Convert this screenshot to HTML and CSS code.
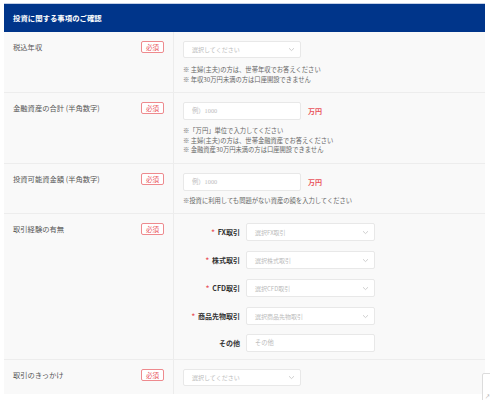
FILE: index.html
```html
<!DOCTYPE html>
<html lang="ja">
<head>
    <meta charset="UTF-8">
    <meta name="viewport" content="width=device-width, initial-scale=1.0">
    <title>投資に関する事項のご確認</title>
    <link rel="stylesheet" href="styles.css">
</head>
<body>
    <div class="form-box">
        <div class="form-head">投資に関する事項のご確認</div>

        <div class="row">
            <div class="row-label">
                <span>税込年収</span>
                <span class="badge">必須</span>
            </div>
            <div class="row-body">
                <div class="select">
                    <span>選択してください</span>
                    <svg class="chev" width="7" height="5" viewBox="0 0 7 5"><path d="M1 1.2 3.5 3.6 6 1.2" fill="none" stroke="#c4c4c4" stroke-width="0.8"/></svg>
                </div>
                <div class="notes">
                    <p>※ 主婦(主夫)の方は、世帯年収でお答えください</p>
                    <p>※ 年収30万円未満の方は口座開設できません</p>
                </div>
            </div>
        </div>

        <div class="row">
            <div class="row-label">
                <span>金融資産の合計 (半角数字)</span>
                <span class="badge">必須</span>
            </div>
            <div class="row-body">
                <div class="field-line">
                    <div class="input">例）1000</div>
                    <span class="unit">万円</span>
                </div>
                <div class="notes notes-tight">
                    <p>※「万円」単位で入力してください</p>
                    <p>※ 主婦(主夫)の方は、世帯金融資産でお答えください</p>
                    <p>※ 金融資産30万円未満の方は口座開設できません</p>
                </div>
            </div>
        </div>

        <div class="row">
            <div class="row-label">
                <span>投資可能資金額 (半角数字)</span>
                <span class="badge">必須</span>
            </div>
            <div class="row-body">
                <div class="field-line">
                    <div class="input">例）1000</div>
                    <span class="unit">万円</span>
                </div>
                <div class="notes notes-one">
                    <p>※投資に利用しても問題がない資産の額を入力してください</p>
                </div>
            </div>
        </div>

        <div class="row">
            <div class="row-label">
                <span>取引経験の有無</span>
                <span class="badge">必須</span>
            </div>
            <div class="row-body body-sub">
                <div class="sub-list">
                    <div class="sub-row">
                        <span class="sub-label"><i>*</i>FX取引</span>
                        <div class="select wide"><span>選択FX取引</span><svg class="chev" width="7" height="5" viewBox="0 0 7 5"><path d="M1 1.2 3.5 3.6 6 1.2" fill="none" stroke="#c4c4c4" stroke-width="0.8"/></svg></div>
                    </div>
                    <div class="sub-row">
                        <span class="sub-label"><i>*</i>株式取引</span>
                        <div class="select wide"><span>選択株式取引</span><svg class="chev" width="7" height="5" viewBox="0 0 7 5"><path d="M1 1.2 3.5 3.6 6 1.2" fill="none" stroke="#c4c4c4" stroke-width="0.8"/></svg></div>
                    </div>
                    <div class="sub-row">
                        <span class="sub-label"><i>*</i>CFD取引</span>
                        <div class="select wide"><span>選択CFD取引</span><svg class="chev" width="7" height="5" viewBox="0 0 7 5"><path d="M1 1.2 3.5 3.6 6 1.2" fill="none" stroke="#c4c4c4" stroke-width="0.8"/></svg></div>
                    </div>
                    <div class="sub-row">
                        <span class="sub-label"><i>*</i>商品先物取引</span>
                        <div class="select wide"><span>選択商品先物取引</span><svg class="chev" width="7" height="5" viewBox="0 0 7 5"><path d="M1 1.2 3.5 3.6 6 1.2" fill="none" stroke="#c4c4c4" stroke-width="0.8"/></svg></div>
                    </div>
                    <div class="sub-row">
                        <span class="sub-label">その他</span>
                        <div class="input wide">その他</div>
                    </div>
                </div>
            </div>
        </div>

        <div class="row">
            <div class="row-label">
                <span>取引のきっかけ</span>
                <span class="badge">必須</span>
            </div>
            <div class="row-body">
                <div class="select">
                    <span>選択してください</span>
                    <svg class="chev" width="7" height="5" viewBox="0 0 7 5"><path d="M1 1.2 3.5 3.6 6 1.2" fill="none" stroke="#c4c4c4" stroke-width="0.8"/></svg>
                </div>
            </div>
        </div>
    </div>

    <div class="corner-tab"><span>↗</span></div>
</body>
</html>
```

FILE: styles.css
```css
body {
    margin: 0;
    background: #fff;
    font-family: "Noto Sans CJK JP", "Noto Sans", sans-serif;
    color: #555;
}
.form-box {
    margin: 3px 5px 0 4px;
}
.form-head {
    height: 28px;
    border-top: 1px solid #c3cfe6;
    background: #00358a;
    color: #fff;
    font-size: 7.4px;
    font-weight: bold;
    line-height: 28px;
    padding-left: 9px;
}
.row {
    display: grid;
    grid-template-columns: 170px 1fr;
    background: #f9f9f9;
    border-top: 1px solid #ededed;
}
.row:nth-child(2) {
    border-top: none;
}
.row-label {
    display: flex;
    justify-content: space-between;
    align-items: flex-start;
    padding: 9px 9px 0 9px;
    border-right: 1px solid #ececec;
    font-size: 7.3px;
    line-height: 12px;
    color: #555;
}
.badge {
    display: inline-block;
    width: 21px;
    height: 10px;
    border: 1px solid #ee8a8e;
    border-radius: 2px;
    background: #fff;
    color: #e9545c;
    font-size: 6.5px;
    line-height: 10px;
    text-align: center;
}
.row-body {
    padding: 9px 0 8px 9px;
}
.body-sub {
    padding-bottom: 7px;
}
.select,
.input {
    box-sizing: border-box;
    width: 118px;
    height: 17px;
    border: 1px solid #e8e8e8;
    border-radius: 2px;
    background: #fff;
    color: #bcbcbc;
    font-size: 6px;
    line-height: 15px;
    padding-left: 8px;
}
.select {
    display: flex;
    justify-content: space-between;
    align-items: center;
    padding-right: 5px;
}
.input {
    height: 18px;
    line-height: 16px;
    font-family: "Liberation Serif", "Noto Sans CJK JP", serif;
    font-size: 6.3px;
}
.wide {
    width: 129px;
    height: 18px;
}
.field-line {
    display: flex;
    align-items: center;
    gap: 7px;
}
.unit {
    color: #e9545c;
    font-size: 7px;
    font-weight: bold;
}
.notes {
    margin-top: 7px;
    font-size: 6.3px;
    line-height: 9.5px;
    color: #666;
}
.notes p {
    margin: 0;
}
.notes-tight {
    margin-top: 6px;
}
.notes-one {
    margin-top: 5px;
}
.sub-list {
    display: flex;
    flex-direction: column;
    gap: 10px;
}
.sub-list .sub-row:last-child {
    margin-top: -1px;
}
.sub-row {
    display: flex;
    align-items: center;
    gap: 6px;
}
.sub-label {
    width: 57px;
    text-align: right;
    color: #333;
    font-size: 7px;
    font-weight: bold;
    white-space: nowrap;
}
.sub-label i {
    font-style: normal;
    color: #e9545c;
    margin-right: 3px;
}
.corner-tab {
    position: absolute;
    left: 482px;
    top: 373px;
    width: 20px;
    height: 40px;
    border: 1px solid #dcdcdc;
    border-radius: 2px;
    background: #fff;
}
.corner-tab span {
    position: absolute;
    left: 2px;
    top: 18px;
    font-size: 5px;
    color: #999;
}
```
